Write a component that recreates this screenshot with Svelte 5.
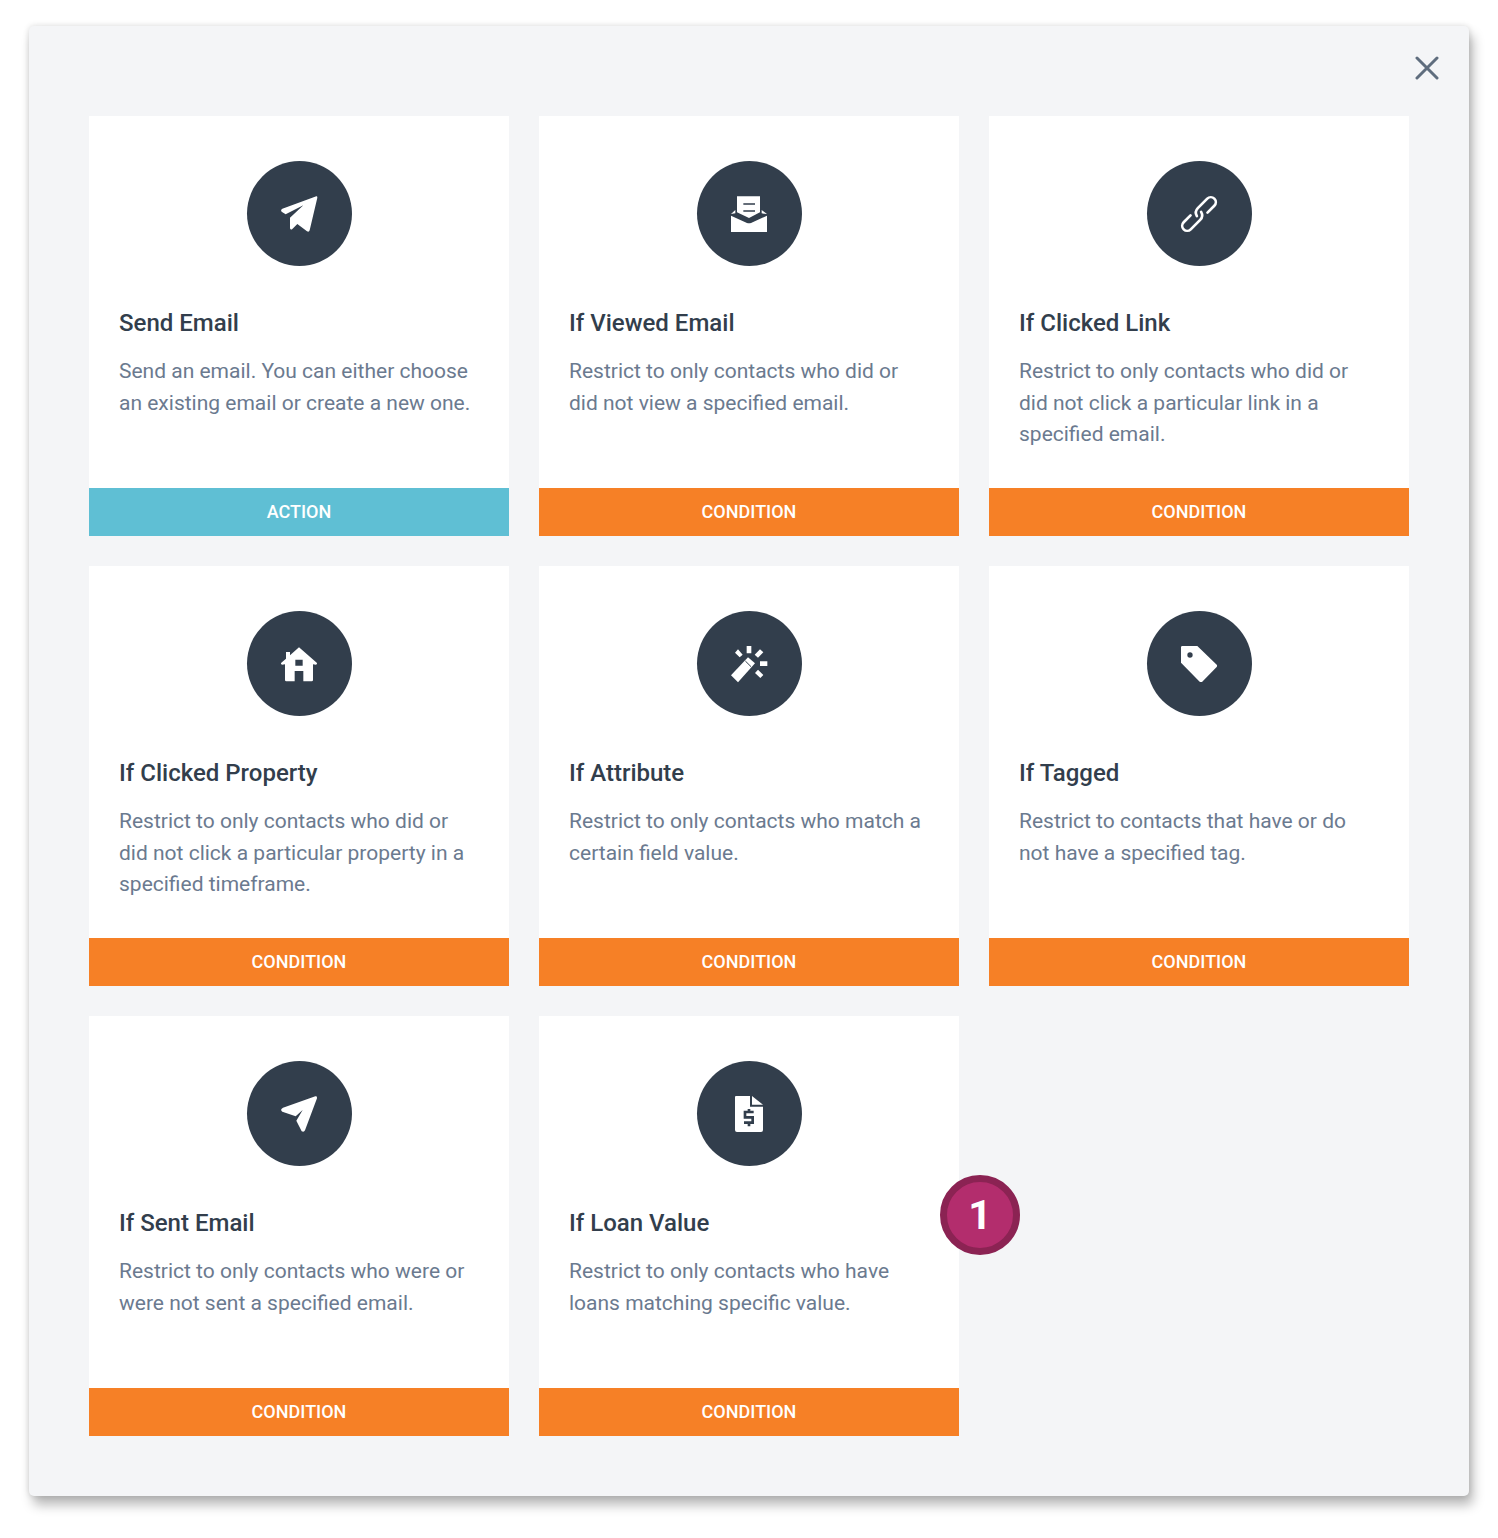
<script>
  const cards = [
    { icon: 'plane', title: 'Send Email', desc: 'Send an email. You can either choose an existing email or create a new one.', type: 'Action' },
    { icon: 'open', title: 'If Viewed Email', desc: 'Restrict to only contacts who did or did not view a specified email.', type: 'Condition' },
    { icon: 'link', title: 'If Clicked Link', desc: 'Restrict to only contacts who did or did not click a particular link in a specified email.', type: 'Condition' },
    { icon: 'home', title: 'If Clicked Property', desc: 'Restrict to only contacts who did or did not click a particular property in a specified timeframe.', type: 'Condition' },
    { icon: 'magic', title: 'If Attribute', desc: 'Restrict to only contacts who match a certain field value.', type: 'Condition' },
    { icon: 'tag', title: 'If Tagged', desc: 'Restrict to contacts that have or do not have a specified tag.', type: 'Condition' },
    { icon: 'arrow', title: 'If Sent Email', desc: 'Restrict to only contacts who were or were not sent a specified email.', type: 'Condition' },
    { icon: 'invoice', title: 'If Loan Value', desc: 'Restrict to only contacts who have loans matching specific value.', type: 'Condition', badge: 1 }
  ];
</script>

<div class="page">
  <div class="modal">
    <button class="close" aria-label="Close">
      <svg viewBox="0 0 24 24" width="24" height="24"><path d="M2 2 L22 22 M22 2 L2 22" /></svg>
    </button>
    <div class="grid">
      {#each cards as c}
        <article class="card">
          <div class="body">
            <div class="circle">
              <svg viewBox="21 18 315 315" width="105" height="105">
                {#if c.icon === 'plane'}
                  <path class="w" d="M229 124 L127 161 Q120 166 126 171 L137 178 L190 151 L150 188 L150 220 Q152 226 157 222 L172 207 L201 229 Q207 232 209 226 L232 128 Q232 123 229 124 Z" />
                {:else if c.icon === 'open'}
                  <path class="w" d="M141 124 H210 V172 L177 189 L141 172 Z" />
                  <path class="w" d="M123 177 L136 165 V175 Z M231 177 L215 165 V175 Z" />
                  <path class="w" d="M123 182 L171 204 Q177 206 183 204 L231 182 V231 H123 Z" />
                  <path class="bar" d="M160 147 H195 M160 168 H195" />
                {:else if c.icon === 'link'}
                  <g class="s" transform="rotate(-45 177 177)">
                    <path d="M168 177 Q172 162 187 162 H227 A15 15 0 0 1 227 192 H198" />
                    <path d="M186 177 Q182 192 167 192 H127 A15 15 0 0 1 127 162 H156" />
                  </g>
                {:else if c.icon === 'home'}
                  <path class="w" fill-rule="evenodd" d="M177 127 L231 174 Q232 178 228 179 L219 178 V225 Q219 229 215 229 H190 V198 H164 V229 H139 Q135 229 135 225 V178 L126 179 Q122 178 123 174 L138 161 V141 H150 V151 Z M166 164 V182 H188 V164 Z" />
                {:else if c.icon === 'magic'}
                  <path class="w" d="M123 211 L174 157 L195 175 L144 232 Z" />
                  <path class="d2" d="M166 168 L183 185" />
                  <path class="w" d="M170 123 H184 V145 H170 Z M144 133 L158 149 L149 157 L135 143 Z M210 133 L220 142 L204 158 L194 149 Z M210 169 H232 V183 H210 Z M204 194 L220 210 L211 219 L195 204 Z" />
                {:else if c.icon === 'tag'}
                  <path class="w" fill-rule="evenodd" d="M127 123 H172 L231 180 Q232 184 230 186 L186 231 Q182 232 179 230 L123 173 V127 Q123 123 127 123 Z M150 142 A8 8 0 1 0 150 158 A8 8 0 1 0 150 142 Z" />
                {:else if c.icon === 'arrow'}
                  <path class="w" d="M226 124 L129 158 Q119 163 127 170 L167 184 L188 165 L169 197 L185 229 Q192 233 195 226 L231 130 Q232 122 226 124 Z" />
                {:else if c.icon === 'invoice'}
                  <path class="w" d="M138 123 H180 V155 H219 V225 Q219 231 213 231 H141 Q135 231 135 225 V126 Q135 123 138 123 Z" />
                  <path class="w" d="M186 123 L219 149 H186 Z" />
                  <path class="dollar" d="M191 171 H165 V187 H188 V203 H162 M177 162 V171 M177 203 V214" />
                {/if}
              </svg>
            </div>
            <h3>{c.title}</h3>
            <p>{c.desc}</p>
          </div>
          <div class="type" class:action={c.type === 'Action'}>{c.type}</div>
          {#if c.badge}<span class="badge">{c.badge}</span>{/if}
        </article>
      {/each}
    </div>
  </div>
</div>

<style>
  :global(body) { margin: 0; background: #fff; }
  .page {
    padding: 26px 29px 42px;
    font-family: Roboto, "Liberation Sans", sans-serif;
  }
  .modal {
    position: relative;
    box-sizing: border-box;
    width: 1440px;
    height: 1470px;
    padding: 90px 60px 60px;
    background: #f4f5f7;
    border-radius: 5px;
    box-shadow: 4px 9px 12px rgba(0, 0, 0, 0.28), 0 0 6px rgba(0, 0, 0, 0.14);
  }
  .close {
    position: absolute;
    top: 30px;
    right: 30px;
    width: 24px;
    height: 24px;
    padding: 0;
    border: 0;
    background: none;
  }
  .close svg { display: block; }
  .close path { fill: none; stroke: #5f6d7e; stroke-width: 3; stroke-linecap: round; }
  .grid {
    display: grid;
    grid-template-columns: repeat(3, 420px);
    grid-auto-rows: 420px;
    gap: 30px;
  }
  .card {
    position: relative;
    display: flex;
    flex-direction: column;
    background: #fff;
  }
  .body {
    flex: 1;
    padding: 45px 30px 0;
  }
  .circle {
    width: 105px;
    height: 105px;
    margin-left: 128px;
    border-radius: 50%;
    background: #323e4c;
  }
  .circle svg { display: block; }
  .w { fill: #fff; }
  .bar { fill: none; stroke: #323e4c; stroke-width: 5; }
  .s path { fill: none; stroke: #fff; stroke-width: 8; stroke-linecap: round; stroke-linejoin: round; }
  .d2 { fill: none; stroke: #323e4c; stroke-width: 3; }
  .dollar { fill: none; stroke: #323e4c; stroke-width: 8; }
  h3 {
    margin: 41px 0 0;
    font-size: 24px;
    line-height: 32px;
    font-weight: 500;
    color: #323e4c;
  }
  p {
    margin: 17px 0 0;
    font-size: 21px;
    line-height: 31.5px;
    font-weight: 400;
    color: #6b7a8f;
  }
  .type {
    height: 48px;
    line-height: 48px;
    text-align: center;
    text-transform: uppercase;
    font-size: 18px;
    font-weight: 500;
    color: #fff;
    background: #f68026;
  }
  .type.action { background: #5fbfd4; }
  .badge {
    position: absolute;
    left: 401px;
    top: 159px;
    box-sizing: border-box;
    width: 80px;
    height: 80px;
    border: 7px solid #8b2353;
    border-radius: 50%;
    background: #b32d6d;
    color: #fff;
    font-size: 41px;
    font-weight: 700;
    line-height: 66px;
    text-align: center;
  }
</style>
